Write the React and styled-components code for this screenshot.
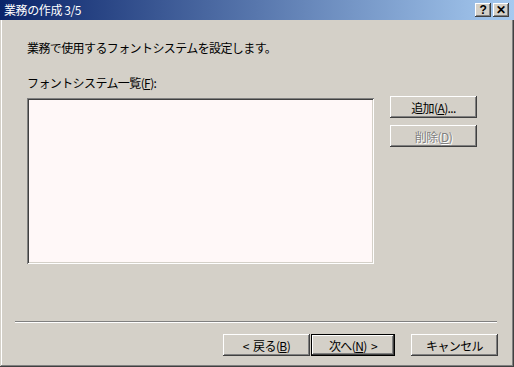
import React from 'react';
import styled, { createGlobalStyle } from 'styled-components';

const face = '#D4D0C8';
const shadow = '#808080';
const darkShadow = '#404040';

const GlobalStyle = createGlobalStyle`
  html, body {
    margin: 0;
    padding: 0;
    background: ${face};
  }
  body {
    font-family: "Noto Sans CJK JP", "Liberation Sans", sans-serif;
    font-size: 12px;
    color: #000;
  }
`;

const Window = styled.div`
  width: 514px;
  height: 367px;
  box-sizing: border-box;
  display: flex;
  flex-direction: column;
  background: ${face};
  padding: 0 2px 3px 2px;
  box-shadow: inset -1px -1px ${darkShadow}, inset 1px 0 ${face},
    inset -2px -2px ${shadow}, inset 2px 0 #fff;
`;

const TitleBar = styled.div`
  height: 20px;
  margin: 0 -2px;
  display: flex;
  align-items: center;
  padding: 0 5px 0 4px;
  background: linear-gradient(to right, #0a246a, #a6caf0);
  color: #fff;
  letter-spacing: -0.4px;
`;

const TitleText = styled.span`
  flex: 1;
  line-height: 14px;
`;

const CaptionButton = styled.div`
  width: 16px;
  height: 14px;
  margin-left: 2px;
  display: flex;
  align-items: center;
  justify-content: center;
  background: ${face};
  color: #000;
  font-family: "Liberation Sans", sans-serif;
  font-weight: bold;
  font-size: 12px;
  box-shadow: inset -1px -1px ${darkShadow}, inset 1px 1px #fff,
    inset -2px -2px ${shadow};
`;

const Main = styled.div`
  flex: 1;
  display: flex;
  flex-direction: column;
  padding-left: 25px;
`;

const Line = styled.div`
  line-height: 16px;
  margin-top: ${(p) => p.$top}px;
  letter-spacing: -0.6px;
`;

const Row = styled.div`
  display: flex;
  align-items: flex-start;
  gap: 16px;
  margin-top: 5px;
`;

const ListBox = styled.div`
  width: 347px;
  height: 166px;
  margin-top: 2px;
  box-sizing: border-box;
  background: #fff8f8;
  box-shadow: inset 1px 1px ${shadow}, inset -1px -1px #fff,
    inset 2px 2px ${darkShadow}, inset -2px -2px ${face};
`;

const SideColumn = styled.div`
  display: flex;
  flex-direction: column;
  gap: 7px;
`;

const Button = styled.div`
  width: ${(p) => p.$w || 87}px;
  height: 22px;
  box-sizing: border-box;
  display: flex;
  align-items: center;
  justify-content: center;
  white-space: pre;
  background: ${face};
  letter-spacing: -0.6px;
  color: ${(p) => (p.$disabled ? shadow : '#000')};
  text-shadow: ${(p) => (p.$disabled ? '1px 1px #fff' : 'none')};
  border: ${(p) => (p.$default ? '1px solid #000' : 'none')};
  box-shadow: inset -1px -1px ${darkShadow}, inset 1px 1px #fff,
    inset -2px -2px ${shadow};
`;

const Key = styled.u`
  text-underline-offset: 1px;
`;

const Footer = styled.div`
  margin-top: auto;
  display: flex;
  flex-direction: column;
  padding-bottom: 8px;
`;

const Separator = styled.div`
  height: 1px;
  margin: 0 15px 0 13px;
  background: ${shadow};
  border-bottom: 1px solid #fff;
`;

const ButtonRow = styled.div`
  display: flex;
  justify-content: flex-end;
  margin: 11px 14px 0 0;
`;

const Gap = styled.div`
  width: ${(p) => p.$w}px;
`;

export default function App() {
  return (
    <>
      <GlobalStyle />
      <Window>
        <TitleBar>
          <TitleText>業務の作成 3/5</TitleText>
          <CaptionButton>?</CaptionButton>
          <CaptionButton>✕</CaptionButton>
        </TitleBar>
        <Main>
          <Line $top={20}>業務で使用するフォントシステムを設定します。</Line>
          <Line $top={19}>
            フォントシステム一覧(<Key>F</Key>):
          </Line>
          <Row>
            <ListBox />
            <SideColumn>
              <Button>
                追加(<Key>A</Key>)...
              </Button>
              <Button $disabled>
                削除(<Key>D</Key>)
              </Button>
            </SideColumn>
          </Row>
        </Main>
        <Footer>
          <Separator />
          <ButtonRow>
            <Button>
              {'<  戻る('}<Key>B</Key>)
            </Button>
            <Gap $w={1} />
            <Button $w={84} $default>
              次へ(<Key>N</Key>){'  >'}
            </Button>
            <Gap $w={16} />
            <Button>キャンセル</Button>
          </ButtonRow>
        </Footer>
      </Window>
    </>
  );
}
